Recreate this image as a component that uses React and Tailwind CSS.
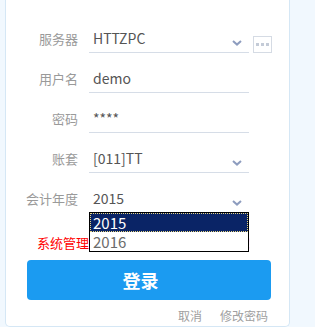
import React from "react";

const F = { fontFamily: '"Noto Sans CJK SC", "Noto Sans", sans-serif' };

function Chevron() {
  return (
    <svg className="absolute right-[7px] top-[16px]" width="10" height="6" viewBox="0 0 10 6">
      <path d="M1 1 L5 4.6 L9 1" fill="none" stroke="#8e9dbf" strokeWidth="2" />
    </svg>
  );
}

function Row({ label, value, select, extra }) {
  return (
    <div className="flex items-center h-[29px] mb-[11px]">
      <div className="w-[72px] text-right text-[13px] leading-[17px] text-[#9a9a9a]">{label}</div>
      <div className="ml-[11px] w-[160px] h-[29px] border-b border-[#d6dde7] flex items-center pl-[4px] text-[14px] text-[#555] relative">
        <span className="leading-[18px]">{value}</span>
        {select && <Chevron />}
      </div>
      {extra && (
        <div className="self-end ml-[4px] w-[19px] h-[17px] border border-[#d5dbe4] flex items-center justify-center gap-[2px]">
          <span className="w-[3px] h-[3px] bg-[#c4cbd7]" />
          <span className="w-[3px] h-[3px] bg-[#c4cbd7]" />
          <span className="w-[3px] h-[3px] bg-[#c4cbd7]" />
        </div>
      )}
    </div>
  );
}

export default function App() {
  return (
    <div className="w-[315px] h-[327px] bg-[#f1f8fe] pl-[5px] overflow-hidden" style={F}>
      <div className="relative w-[285px] h-[327px] bg-white border-x border-b border-[#d5e7f5] rounded-b-[5px] pt-[24px]">
        <Row label="服务器" value="HTTZPC" select extra />
        <Row label="用户名" value="demo" />
        <Row label="密码" value="****" />
        <Row label="账套" value="[011]TT" select />
        <Row label="会计年度" value="2015" select />

        <div className="mt-[21px] pl-[31px] text-[13px] leading-[17px] text-[#ff0000] whitespace-nowrap">
          系统管理员用户不能登录此业务账套！
        </div>

        <div className="mt-[9px] ml-[21px] w-[244px] h-[40px] bg-[#1b9bf1] rounded-[4px] flex items-center justify-center pr-[17px] text-white text-[18px] font-bold">
          登录
        </div>

        <div className="mt-[9px] pr-[21px] flex justify-end gap-[18px] text-[12px] leading-[14px] text-[#a0a0a0]">
          <span>取消</span>
          <span>修改密码</span>
        </div>

        <div className="absolute left-[83px] top-[212px] w-[160px] h-[40px] bg-white border border-black text-[15px]">
          <div className="h-[19px] bg-[#0a2466] text-white pl-[3px] leading-[19px] outline-1 outline-dotted outline-[#e8d680] -outline-offset-1">
            2015
          </div>
          <div className="h-[19px] text-[#6b6b6b] pl-[3px] leading-[19px]">2016</div>
        </div>
      </div>
    </div>
  );
}
